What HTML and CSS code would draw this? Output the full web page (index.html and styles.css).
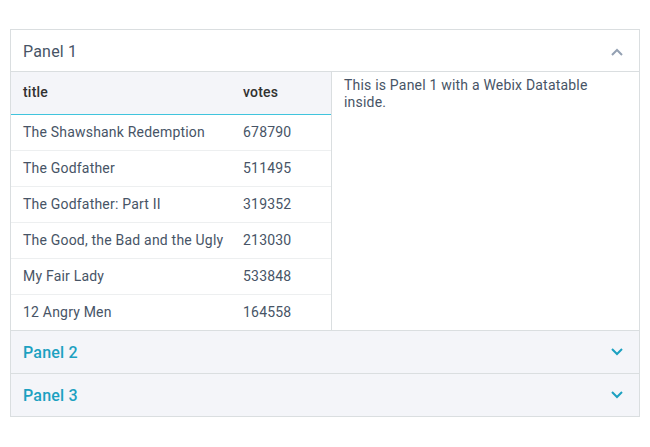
FILE: index.html
```html
<!DOCTYPE html>
<html lang="en">
<head>
    <meta charset="UTF-8">
    <title>Accordion with Datatable</title>
    <link rel="stylesheet" href="styles.css">
</head>
<body>
    <div class="accordion">
        <div class="acc-item">
            <div class="acc-header">
                <span>Panel 1</span>
                <svg class="chevron" width="12" height="8" viewBox="0 0 12 8"><path d="M1 7L6 2l5 5" fill="none" stroke="currentColor" stroke-width="2"/></svg>
            </div>
            <div class="acc-body">
                <div class="dtable">
                    <div class="dt-row dt-head">
                        <div class="dt-cell c-title">title</div>
                        <div class="dt-cell c-votes">votes</div>
                    </div>
                    <div class="dt-row"><div class="dt-cell c-title">The Shawshank Redemption</div><div class="dt-cell c-votes">678790</div></div>
                    <div class="dt-row"><div class="dt-cell c-title">The Godfather</div><div class="dt-cell c-votes">511495</div></div>
                    <div class="dt-row"><div class="dt-cell c-title">The Godfather: Part II</div><div class="dt-cell c-votes">319352</div></div>
                    <div class="dt-row"><div class="dt-cell c-title">The Good, the Bad and the Ugly</div><div class="dt-cell c-votes">213030</div></div>
                    <div class="dt-row"><div class="dt-cell c-title">My Fair Lady</div><div class="dt-cell c-votes">533848</div></div>
                    <div class="dt-row"><div class="dt-cell c-title">12 Angry Men</div><div class="dt-cell c-votes">164558</div></div>
                </div>
                <div class="template">This is Panel 1 with a Webix Datatable inside.</div>
            </div>
        </div>
        <div class="acc-item collapsed">
            <div class="acc-header">
                <span>Panel 2</span>
                <svg class="chevron" width="12" height="8" viewBox="0 0 12 8"><path d="M1 1l5 5 5-5" fill="none" stroke="currentColor" stroke-width="2"/></svg>
            </div>
        </div>
        <div class="acc-item collapsed">
            <div class="acc-header">
                <span>Panel 3</span>
                <svg class="chevron" width="12" height="8" viewBox="0 0 12 8"><path d="M1 1l5 5 5-5" fill="none" stroke="currentColor" stroke-width="2"/></svg>
            </div>
        </div>
    </div>
</body>
</html>
```

FILE: styles.css
```css
* {
    margin: 0;
    padding: 0;
    box-sizing: border-box;
}

body {
    font-family: Roboto, "Liberation Sans", sans-serif;
    font-size: 14px;
    letter-spacing: 0.2px;
    color: #475466;
    background: #fff;
    padding: 29px 10px 0 10px;
}

.accordion {
    width: 630px;
    border: 1px solid #dadee0;
}

.acc-item + .acc-item {
    border-top: 1px solid #dadee0;
}

.acc-header {
    height: 42px;
    display: flex;
    align-items: center;
    justify-content: space-between;
    padding: 2px 16px 0 12px;
    font-size: 16px;
    color: #475466;
    background: #fff;
    border-bottom: 1px solid #dadee0;
}

.acc-header .chevron {
    color: #94a1b3;
}

.collapsed .acc-header {
    background: #f4f5f9;
    color: #1ca1c1;
    font-weight: 500;
    border-bottom: none;
    padding-top: 0;
}

.collapsed .acc-header .chevron {
    color: #1ca1c1;
}

.acc-body {
    display: flex;
    height: 258px;
}

.dtable {
    width: 321px;
    border-right: 1px solid #dadee0;
}

.dt-row {
    display: flex;
    height: 36px;
    padding-bottom: 1px;
    border-bottom: 1px solid #edeff0;
}

.dt-row:last-child {
    border-bottom: none;
    padding-bottom: 2px;
}

.dt-head {
    height: 43px;
    background: #f4f5f9;
    border-bottom: 1px solid #40c4dd;
    color: #313131;
    font-weight: 500;
    padding-bottom: 2px;
}

.dt-cell {
    display: flex;
    align-items: center;
    padding: 0 12px;
    white-space: nowrap;
}

.c-title {
    width: 220px;
}

.c-votes {
    flex: 1;
}

.template {
    flex: 1;
    padding: 5px 12px;
    line-height: 17px;
    max-width: 270px;
}
```
